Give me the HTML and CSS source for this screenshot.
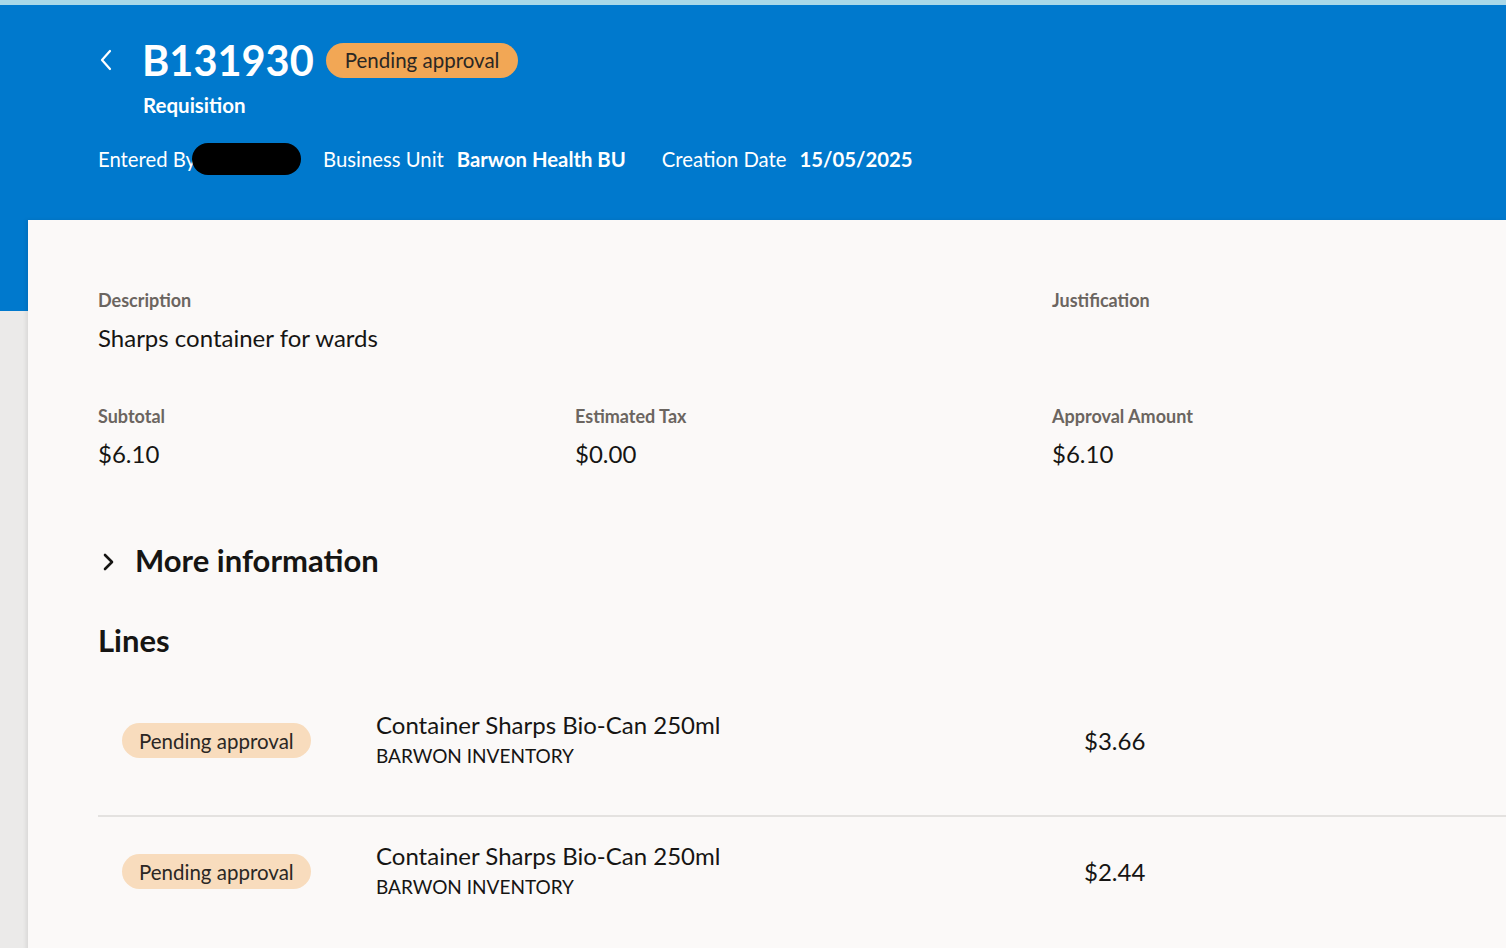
FILE: index.html
```html
<!DOCTYPE html>
<html>
    <head>
        <meta charset="utf-8">
        <title>B131930 - Requisition</title>
        <link rel="stylesheet" href="styles.css">
    </head>
    <body>
        <div class="topstrip"></div>
        <div class="hero">
            <div class="title-row">
                <a class="back" href="javascript:;">
                    <svg width="14" height="22" viewBox="0 0 14 22"><path d="M11 2 L3 11 L11 20" fill="none" stroke="#fff" stroke-width="2.2" stroke-linecap="round" stroke-linejoin="round"/></svg>
                </a>
                <h1 class="req-no">B131930</h1>
                <span class="badge badge-strong">Pending approval</span>
            </div>
            <div class="req-type">Requisition</div>
            <div class="meta">
                <span class="meta-label">Entered By</span>
                <span class="redact"></span>
                <span class="meta-label">Business Unit</span>
                <span class="meta-value">Barwon Health BU</span>
                <span class="meta-label gap">Creation Date</span>
                <span class="meta-value">15/05/2025</span>
            </div>
        </div>

        <div class="card">
            <div class="fields">
                <div class="field wide">
                    <div class="label">Description</div>
                    <div class="value">Sharps container for wards</div>
                </div>
                <div class="field">
                    <div class="label">Justification</div>
                </div>
                <div class="field">
                    <div class="label">Subtotal</div>
                    <div class="value">$6.10</div>
                </div>
                <div class="field">
                    <div class="label">Estimated Tax</div>
                    <div class="value">$0.00</div>
                </div>
                <div class="field">
                    <div class="label">Approval Amount</div>
                    <div class="value">$6.10</div>
                </div>
            </div>

            <div class="more">
                <svg width="16" height="20" viewBox="0 0 16 20"><path d="M4 3 L11 10 L4 17" fill="none" stroke="#161513" stroke-width="2.6" stroke-linecap="round" stroke-linejoin="round"/></svg>
                <span>More information</span>
            </div>

            <h2 class="lines-title">Lines</h2>

            <div class="lines">
                <div class="line">
                    <span class="badge badge-soft">Pending approval</span>
                    <div class="item">
                        <div class="item-name">Container Sharps Bio-Can 250ml</div>
                        <div class="item-source">BARWON INVENTORY</div>
                    </div>
                    <div class="price">$3.66</div>
                </div>
                <div class="line">
                    <span class="badge badge-soft">Pending approval</span>
                    <div class="item">
                        <div class="item-name">Container Sharps Bio-Can 250ml</div>
                        <div class="item-source">BARWON INVENTORY</div>
                    </div>
                    <div class="price">$2.44</div>
                </div>
            </div>
        </div>
    </body>
</html>
```

FILE: styles.css
```css
*{
    margin:0;
    padding:0;
    box-sizing:border-box;
}
body{
    background:#ebeae9;
    font-family:Lato, "Liberation Sans", sans-serif;
    color:#161513;
    overflow:hidden;
}
.topstrip{
    height:5px;
    background:#a9d8e8;
}
.hero{
    height:306px;
    background:#0079cd;
    color:#fff;
    padding-top:31px;
}
.title-row{
    display:flex;
    align-items:center;
    height:48px;
    padding-left:99px;
}
.back{
    display:flex;
    width:43px;
}
.req-no{
    font-size:41.5px;
    font-weight:700;
    line-height:48px;
    margin-right:12px;
}
.badge{
    display:inline-flex;
    align-items:center;
    height:35px;
    padding:0 17px;
    border-radius:18px;
    font-size:20.5px;
    color:#2b2724;
    white-space:nowrap;
}
.badge-strong{
    background:#f2a755;
    padding:0 19px;
}
.badge-soft{
    background:#f8dcbd;
}
.req-type{
    margin-top:9px;
    padding-left:143px;
    font-size:20.5px;
    font-weight:700;
    line-height:24px;
}
.meta{
    display:flex;
    align-items:center;
    margin-top:25px;
    padding-left:98px;
    height:34px;
    font-size:20.3px;
}
.meta-label{
    margin-right:13px;
}
.meta-label.gap{
    margin-left:36px;
}
.meta-value{
    font-weight:700;
}
.redact{
    width:109px;
    height:32px;
    background:#000;
    border-radius:16px;
    margin:0 22px 0 -17px;
}
.card{
    margin:-91px 0 0 28px;
    min-height:760px;
    background:#fbf9f8;
    box-shadow:-2px 0 4px rgba(0,0,0,0.08);
    padding:70px 0 0 70px;
}
.fields{
    display:grid;
    grid-template-columns:477px 477px 477px;
    row-gap:54px;
}
.field.wide{
    grid-column:span 2;
}
.label{
    font-size:18px;
    font-weight:700;
    line-height:20px;
    color:#6b6560;
}
.value{
    margin-top:14px;
    font-size:24px;
    line-height:28px;
}
.more{
    display:flex;
    align-items:center;
    margin-top:74px;
    height:36px;
}
.more svg{
    margin:4px 18px 0 3px;
}
.more span{
    font-size:31px;
    font-weight:700;
}
.lines-title{
    margin-top:45px;
    font-size:31px;
    font-weight:700;
    line-height:34px;
}
.lines{
    margin-top:28px;
}
.line{
    display:grid;
    grid-template-columns:254px 708px auto;
    align-items:center;
    padding:25px 0 44px 24px;
}
.line + .line{
    border-top:2px solid #e4e2e0;
    padding-top:24px;
}
.line .badge{
    justify-self:start;
}
.item-name{
    font-size:24px;
    line-height:30px;
}
.item-source{
    font-size:19px;
    line-height:31px;
}
.price{
    font-size:24px;
}
```
